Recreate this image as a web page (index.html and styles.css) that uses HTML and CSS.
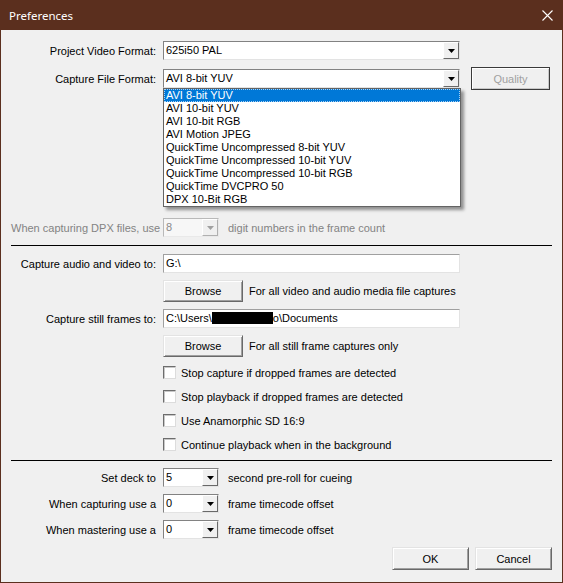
FILE: index.html
```html
<!DOCTYPE html>
<html>
<head>
<meta charset="utf-8">
<title>Preferences</title>
<link rel="stylesheet" href="styles.css">
</head>
<body>
<div class="window">
  <div class="titlebar">
    <span class="title">Preferences</span>
    <svg class="close" width="11" height="11" viewBox="0 0 11 11"><path d="M0.5 0.5L10.5 10.5M10.5 0.5L0.5 10.5" stroke="#fff" stroke-width="1.1" fill="none"/></svg>
  </div>
  <div class="content">
    <div class="row r1">
      <span class="lbl">Project Video Format:</span>
      <div class="select wide">
        <span class="val">625i50 PAL</span>
        <span class="arrow"><svg width="7" height="4" viewBox="0 0 7 4"><path d="M0 0H7L3.5 4Z" fill="#000"/></svg></span>
      </div>
    </div>
    <div class="row r2">
      <span class="lbl">Capture File Format:</span>
      <div class="select-wrap">
        <div class="select wide">
          <span class="val">AVI 8-bit YUV</span>
          <span class="arrow"><svg width="7" height="4" viewBox="0 0 7 4"><path d="M0 0H7L3.5 4Z" fill="#000"/></svg></span>
        </div>
        <div class="dropdown">
          <div class="opt sel">AVI 8-bit YUV</div>
          <div class="opt">AVI 10-bit YUV</div>
          <div class="opt">AVI 10-bit RGB</div>
          <div class="opt">AVI Motion JPEG</div>
          <div class="opt">QuickTime Uncompressed 8-bit YUV</div>
          <div class="opt">QuickTime Uncompressed 10-bit YUV</div>
          <div class="opt">QuickTime Uncompressed 10-bit RGB</div>
          <div class="opt">QuickTime DVCPRO 50</div>
          <div class="opt">DPX 10-Bit RGB</div>
        </div>
      </div>
      <button class="btn quality">Quality</button>
    </div>
    <div class="row dpx disabled">
      <span class="lbl">When capturing DPX files, use</span>
      <div class="select small dis">
        <span class="val">8</span>
        <span class="arrow"><svg width="7" height="4" viewBox="0 0 7 4"><path d="M0 0H7L3.5 4Z" fill="#a0a0a0"/></svg></span>
      </div>
      <span class="after">digit numbers in the frame count</span>
    </div>
    <div class="sep s1"></div>
    <div class="row field f1">
      <span class="lbl">Capture audio and video to:</span>
      <div class="input wide">G:\</div>
    </div>
    <div class="row brow">
      <span class="lbl"></span>
      <button class="btn browse">Browse</button>
      <span class="note">For all video and audio media file captures</span>
    </div>
    <div class="row field f2">
      <span class="lbl">Capture still frames to:</span>
      <div class="input wide">C:\Users\<span class="redact"></span>o\Documents</div>
    </div>
    <div class="row brow">
      <span class="lbl"></span>
      <button class="btn browse">Browse</button>
      <span class="note">For all still frame captures only</span>
    </div>
    <div class="checks">
      <div class="check"><span class="cb"></span><span>Stop capture if dropped frames are detected</span></div>
      <div class="check"><span class="cb"></span><span>Stop playback if dropped frames are detected</span></div>
      <div class="check"><span class="cb"></span><span>Use Anamorphic SD 16:9</span></div>
      <div class="check"><span class="cb"></span><span>Continue playback when in the background</span></div>
    </div>
    <div class="sep s2"></div>
    <div class="row deck d1">
      <span class="lbl">Set deck to</span>
      <div class="select small">
        <span class="val">5</span>
        <span class="arrow"><svg width="7" height="4" viewBox="0 0 7 4"><path d="M0 0H7L3.5 4Z" fill="#000"/></svg></span>
      </div>
      <span class="after">second pre-roll for cueing</span>
    </div>
    <div class="row deck">
      <span class="lbl">When capturing use a</span>
      <div class="select small">
        <span class="val">0</span>
        <span class="arrow"><svg width="7" height="4" viewBox="0 0 7 4"><path d="M0 0H7L3.5 4Z" fill="#000"/></svg></span>
      </div>
      <span class="after">frame timecode offset</span>
    </div>
    <div class="row deck">
      <span class="lbl">When mastering use a</span>
      <div class="select small">
        <span class="val">0</span>
        <span class="arrow"><svg width="7" height="4" viewBox="0 0 7 4"><path d="M0 0H7L3.5 4Z" fill="#000"/></svg></span>
      </div>
      <span class="after">frame timecode offset</span>
    </div>
    <div class="actions">
      <button class="btn act">OK</button>
      <button class="btn act">Cancel</button>
    </div>
  </div>
</div>
</body>
</html>
```

FILE: styles.css
```css
* { box-sizing: border-box; }
html, body { margin: 0; padding: 0; }
body {
  width: 563px;
  height: 583px;
  overflow: hidden;
  background: #f0f0f0;
  font-family: "Liberation Sans", Arial, sans-serif;
  font-size: 11px;
  color: #000;
}
.window {
  width: 563px;
  height: 583px;
  display: flex;
  flex-direction: column;
  border: 1px solid #5b2f1e;
  border-top: 0;
  background: #f0f0f0;
}
.titlebar {
  height: 30px;
  flex: none;
  margin: 0 -1px;
  background: #5b2f1e;
  display: flex;
  align-items: center;
  justify-content: space-between;
  padding: 0 10px 0 9px;
  color: #fff;
  font-family: "Noto Sans", sans-serif;
  font-size: 11.5px;
}
.close { display: block; }
.content {
  flex: 1;
  padding: 11px 10px 0 10px;
}
.row { display: flex; align-items: center; }
.lbl {
  width: 145px;
  flex: none;
  margin-right: 7px;
  text-align: right;
  white-space: nowrap;
}
.r1 { height: 19px; }
.r2 { height: 23px; margin-top: 7px; }
.select-wrap { position: relative; }
.select {
  display: flex;
  height: 19px;
  background: #fff;
  border: 1px solid;
  border-color: #828282 #e3e3e3 #e3e3e3 #828282;
}
.select.wide { width: 297px; }
.select.small { width: 56px; }
.select .val {
  flex: 1;
  padding-left: 2px;
  line-height: 16px;
  white-space: nowrap;
}
.select .arrow {
  width: 16px;
  height: 17px;
  flex: none;
  background: #f0f0f0;
  border: 1px solid;
  border-color: #fff #696969 #696969 #fff;
  display: flex;
  align-items: center;
  justify-content: center;
}
.select .arrow svg { display: block; }
.select.dis { background: #f7f7f7; border-color: #b9b9b9 #e9e9e9 #e9e9e9 #b9b9b9; }
.select.dis .val { color: #8a8a8a; }
.select.dis .arrow { border-color: #fff #b0b0b0 #b0b0b0 #fff; }
.dropdown {
  position: absolute;
  top: 19px;
  left: 0;
  width: 298px;
  background: #fff;
  border: 1px solid #646464;
  box-shadow: 3px 3px 3px rgba(0, 0, 0, 0.4);
  z-index: 5;
}
.opt {
  height: 13px;
  line-height: 13px;
  padding-left: 2px;
  white-space: nowrap;
}
.opt.sel {
  background: #0078d7;
  color: #fff;
  outline: 1px dotted #a8d0f2;
  outline-offset: -1px;
}
.btn {
  font: inherit;
  color: #000;
  background: #f0f0f0;
  border: 1px solid;
  border-color: #e3e3e3 #696969 #696969 #e3e3e3;
  box-shadow: inset 1px 1px 0 #fff, inset -1px -1px 0 #a0a0a0;
  padding: 0;
  margin: 0;
}
.quality {
  width: 79px;
  height: 23px;
  margin-left: 11px;
  color: #a0a0a0;
  border-color: #3a3a3a;
  box-shadow: inset 1px 1px 0 #fff, inset -1px -1px 0 #c8c8c8;
}
.dpx { height: 19px; margin-top: 128px; }
.disabled .lbl { color: #838383; }
.disabled .after { color: #838383; }
.after { margin-left: 9px; white-space: nowrap; }
.sep { height: 1px; background: #000; }
.s1 { margin-top: 8px; }
.s2 { margin-top: 9px; }
.input {
  height: 19px;
  background: #fff;
  border: 1px solid;
  border-color: #a0a0a0 #e3e3e3 #e3e3e3 #a0a0a0;
  padding-left: 2px;
  line-height: 16px;
  white-space: nowrap;
  overflow: hidden;
}
.input.wide { width: 297px; }
.f1 { margin-top: 8px; }
.f2 { margin-top: 7px; }
.brow { height: 22px; margin-top: 7px; }
.browse { width: 80px; height: 22px; }
.note { margin-left: 6px; white-space: nowrap; }
.redact {
  display: inline-block;
  width: 61px;
  height: 12px;
  background: #000;
  vertical-align: -2px;
}
.checks {
  margin-top: 9px;
  margin-left: 152px;
  display: flex;
  flex-direction: column;
  gap: 11px;
}
.check { display: flex; align-items: center; height: 13px; white-space: nowrap; }
.cb {
  width: 13px;
  height: 13px;
  flex: none;
  margin-right: 5px;
  background: #fff;
  border: 1px solid;
  border-color: #6d6d6d #dcdcdc #dcdcdc #6d6d6d;
  box-shadow: inset 1px 1px 0 #c8c8c8;
}
.deck { height: 19px; margin-top: 7px; }
.d1 { margin-top: 7px; }
.actions {
  display: flex;
  justify-content: flex-end;
  gap: 6px;
  margin-top: 8px;
}
.act { width: 77px; height: 23px; }
```
